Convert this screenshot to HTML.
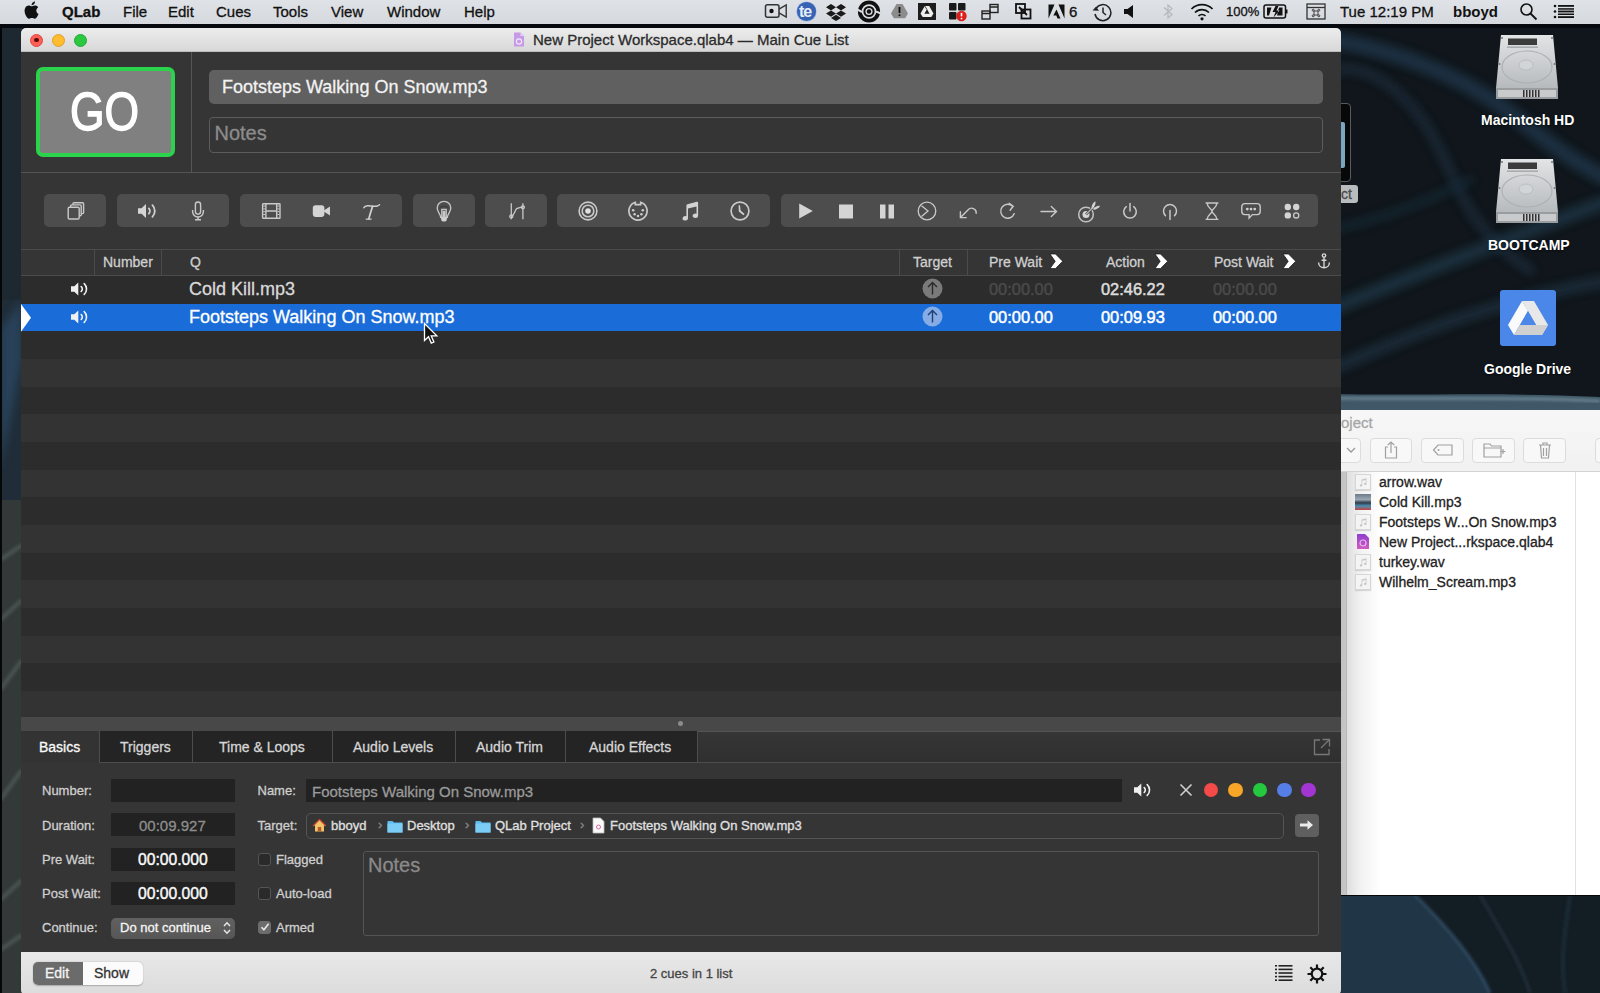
<!DOCTYPE html>
<html><head><meta charset="utf-8">
<style>
*{margin:0;padding:0;box-sizing:border-box}
html,body{width:1600px;height:993px;overflow:hidden}
body{position:relative;font-family:"Liberation Sans",sans-serif;background:#152028}
.a{position:absolute}
.t{position:absolute;white-space:pre;line-height:1;-webkit-text-stroke:0.3px currentColor}
#desk{left:0;top:0;width:1600px;height:993px;
background:
radial-gradient(ellipse 300px 120px at 1420px 960px, rgba(40,70,95,.55), rgba(0,0,0,0) 70%),
radial-gradient(ellipse 200px 400px at 1380px 300px, rgba(30,55,75,.35), rgba(0,0,0,0) 70%),
linear-gradient(160deg,#18252f 0%,#111a21 40%,#16232c 70%,#1b2d3a 100%);}
#menubar{left:0;top:0;width:1600px;height:23.5px;background:linear-gradient(#dfe2e6,#d5d9de);color:#111;font-size:15px}
#menubar .t{top:4px}
.light{width:13px;height:13px;border-radius:50%}
.tg{top:193.8px;height:33px;background:#4d4d4d;border-radius:5px}
.ic{top:198.5px;width:24px;height:24px}
.hd{top:255px;font-size:14px;color:#cfcfcf}
.tm{font-size:16.4px;-webkit-text-stroke:0.5px currentColor}
.tb{top:740px;font-size:14px;color:#d6d6d6}
.lb{font-size:13px;color:#cfcfcf}
.fld{width:124px;height:23px;background:#222}
.dot{top:782.5px;width:14.6px;height:14.6px;border-radius:50%}
.bc{top:818.5px;font-size:13px;color:#e0e0e0}
.bcs{top:817.5px;font-size:13px;color:#888}
.fold{top:819px;width:16px;height:14px}
.cb{width:13px;height:13px;border:1px solid #555;border-radius:3px;background:#2a2a2a}
.dl{font-size:14px;font-weight:bold;color:#fff;text-shadow:0 1px 2px rgba(0,0,0,.6);-webkit-text-stroke:0}
.fb{top:438px;height:24.5px;border:1px solid #dcdcdc;border-radius:4px;background:#f8f8f8}
.fi{left:1355px;width:16px;height:16px;border:1px solid #d6d6d6;background:#f4f4f4;box-shadow:0 1px 1px rgba(0,0,0,.12)}
.ft{left:1379px;font-size:14px;color:#222}
</style></head><body>
<div id="desk" class="a"></div>
<svg class="a" style="left:0;top:0" width="1600" height="993" viewBox="0 0 1600 993">
<defs>
<filter id="bl4" x="-50%" y="-50%" width="200%" height="200%"><feGaussianBlur stdDeviation="4"/></filter>
<filter id="bl2" x="-50%" y="-50%" width="200%" height="200%"><feGaussianBlur stdDeviation="1.5"/></filter>
</defs>
<rect x="0" y="0" width="1600" height="993" fill="#10161b"/>
<!-- left strip -->
<rect x="0" y="22" width="22" height="300" fill="#1e2830"/>
<rect x="0" y="300" width="22" height="200" fill="#202d38"/>
<path d="M0 330 L22 300 L22 360 L0 470z" fill="#2a4662" filter="url(#bl4)" opacity=".8"/>
<rect x="0" y="500" width="22" height="493" fill="#333938"/>
<path d="M0 560 L22 545 M0 690 L22 660 M0 800 L22 770 M0 900 L22 880 M0 620 L22 600 M0 950 L22 935" stroke="#4a524f" stroke-width="4" filter="url(#bl2)"/>
<rect x="0" y="22" width="2" height="971" fill="#050607"/>
<!-- right desktop streaks -->
<g fill="none" stroke-linecap="round">
<path d="M1330 40 C1400 50 1470 80 1520 120 S1590 170 1610 180" stroke="#1d3344" stroke-width="16" filter="url(#bl4)" opacity=".9"/>
<path d="M1330 70 C1380 60 1420 110 1440 150 S1470 230 1530 270" stroke="#1a2c3a" stroke-width="10" filter="url(#bl4)" opacity=".8"/>
<path d="M1330 310 C1400 280 1480 250 1610 200" stroke="#1e3444" stroke-width="14" filter="url(#bl4)" opacity=".8"/>
<path d="M1330 370 C1420 330 1500 300 1610 280" stroke="#1b2f3e" stroke-width="12" filter="url(#bl4)" opacity=".8"/>
<path d="M1330 230 C1380 220 1430 200 1470 180" stroke="#192a37" stroke-width="8" filter="url(#bl4)" opacity=".7"/>
</g>
<!-- band above finder -->
<path d="M1330 394 C1420 396 1500 392 1600 397 L1600 411 L1330 411z" fill="#3f5766"/>
<path d="M1330 398 C1420 400 1500 396 1600 401" stroke="#7b94a2" stroke-width="2" fill="none" filter="url(#bl2)"/>
<!-- bottom right -->
<rect x="1330" y="895" width="270" height="98" fill="#131d24"/>
<path d="M1330 895 L1415 895 C1450 930 1475 960 1490 993 L1330 993z" fill="#203545"/>
<rect x="1330" y="893.5" width="270" height="2.5" fill="#050505"/>
<path d="M1415 895 C1450 930 1475 960 1490 993" stroke="#2e4a60" stroke-width="3" fill="none" filter="url(#bl2)"/>
<path d="M1480 895 C1500 930 1520 960 1530 993 M1570 895 C1565 930 1560 960 1565 993" stroke="#1c2a34" stroke-width="4" fill="none" filter="url(#bl2)"/>
<!-- menubar shadow band -->
<rect x="0" y="22" width="1600" height="6" fill="#06090d"/>
</svg>
<!-- desktop icons -->
<svg class="a" style="left:1494px;top:33px" width="66" height="68" viewBox="0 0 66 68"><defs><linearGradient id="hdg" x1="0" y1="0" x2="0" y2="1"><stop offset="0" stop-color="#e2e4e6"/><stop offset="1" stop-color="#b7babd"/></linearGradient></defs><path d="M7 2h52l5 53H2z" fill="url(#hdg)"/><rect x="2" y="55" width="62" height="11" fill="#9a9da0"/><rect x="4" y="57" width="58" height="7" fill="#c8cacc"/><g fill="#333"><rect x="29" y="57" width="1.5" height="7"/><rect x="32" y="57" width="1.5" height="7"/><rect x="35" y="57" width="1.5" height="7"/><rect x="38" y="57" width="1.5" height="7"/><rect x="41" y="57" width="1.5" height="7"/><rect x="44" y="57" width="1.5" height="7"/></g><rect x="14" y="5.5" width="29" height="6.5" fill="#3c3c3c"/><rect x="13" y="13.5" width="31" height="1.3" fill="#9fa2a5"/><circle cx="8" cy="5" r="1" fill="#777"/><circle cx="58" cy="5" r="1" fill="#777"/><circle cx="5.5" cy="31" r="1" fill="#777"/><circle cx="60.5" cy="31" r="1" fill="#777"/><ellipse cx="33" cy="34" rx="25" ry="16" fill="none" stroke="#aeb1b4" stroke-width="1.2"/><ellipse cx="32" cy="32" rx="7" ry="5" fill="#d2d5d8" stroke="#b5b8bb" stroke-width=".8"/></svg>
<div class="t dl" style="left:1481px;top:113px">Macintosh HD</div>
<svg class="a" style="left:1494px;top:157px" width="66" height="68" viewBox="0 0 66 68"><path d="M7 2h52l5 53H2z" fill="url(#hdg)"/><rect x="2" y="55" width="62" height="11" fill="#9a9da0"/><rect x="4" y="57" width="58" height="7" fill="#c8cacc"/><g fill="#333"><rect x="29" y="57" width="1.5" height="7"/><rect x="32" y="57" width="1.5" height="7"/><rect x="35" y="57" width="1.5" height="7"/><rect x="38" y="57" width="1.5" height="7"/><rect x="41" y="57" width="1.5" height="7"/><rect x="44" y="57" width="1.5" height="7"/></g><rect x="14" y="5.5" width="29" height="6.5" fill="#3c3c3c"/><rect x="13" y="13.5" width="31" height="1.3" fill="#9fa2a5"/><circle cx="8" cy="5" r="1" fill="#777"/><circle cx="58" cy="5" r="1" fill="#777"/><circle cx="5.5" cy="31" r="1" fill="#777"/><circle cx="60.5" cy="31" r="1" fill="#777"/><ellipse cx="33" cy="34" rx="25" ry="16" fill="none" stroke="#aeb1b4" stroke-width="1.2"/><ellipse cx="32" cy="32" rx="7" ry="5" fill="#d2d5d8" stroke="#b5b8bb" stroke-width=".8"/></svg>
<div class="t dl" style="left:1488px;top:238px">BOOTCAMP</div>
<div class="a" style="left:1500px;top:289.5px;width:56px;height:56px;border-radius:3px;background:#4a87e8"></div>
<svg class="a" style="left:1506px;top:297px" width="44" height="40" viewBox="0 0 44 40"><path d="M16 4h12l14 24-6 10z" fill="#e8e8e8"/><path d="M16 4L2 28l6 10 14-24z" fill="#fafafa"/><path d="M8 38h28l6-10H14z" fill="#d0d0d0"/><path d="M22 14l-8 14h16z" fill="#4a87e8"/></svg>
<div class="t dl" style="left:1484px;top:362px">Google Drive</div>

<!-- back window remnant -->
<div class="a" style="left:1330px;top:102.5px;width:21px;height:79px;border:1.5px solid #5a5a5a;border-radius:4px;background:#06080a"></div>
<div class="a" style="left:1341px;top:122px;width:3.5px;height:46px;border-radius:0 2px 2px 0;background:#7aa7bf"></div>
<div class="a" style="left:1330px;top:185px;width:28px;height:18px;border-radius:3px;background:#b9bcbe"></div>
<div class="t" style="left:1341px;top:187px;font-size:14px;color:#4a4a4a">ct</div>

<!-- finder window -->
<div class="a" style="left:1330px;top:409.5px;width:270px;height:485px;background:#fff"></div>
<div class="a" style="left:1330px;top:409.5px;width:270px;height:62px;background:linear-gradient(#f7f7f7,#f1f1f1);border-bottom:1px solid #d4d4d4"></div>
<div class="t" style="left:1336px;top:415px;font-size:15px;color:#a6a6a6">roject</div>
<div class="a fb" style="left:1326px;width:35px"></div>
<svg class="a" style="left:1344px;top:444px" width="14" height="12" viewBox="0 0 14 12"><path d="M3 4l4 4 4-4" fill="none" stroke="#999" stroke-width="1.3"/></svg>
<div class="a fb" style="left:1370px;width:42px"></div>
<svg class="a" style="left:1381px;top:440px" width="20" height="20" viewBox="0 0 20 20"><g fill="none" stroke="#a0a0a0" stroke-width="1.2"><path d="M7 7H4.5v11h11V7H13M10 13V2M6.8 5L10 2l3.2 3"/></g></svg>
<div class="a fb" style="left:1421px;width:43px"></div>
<svg class="a" style="left:1432px;top:443px" width="22" height="14" viewBox="0 0 22 14"><path d="M6 2h14v10H6L1.5 7z" fill="none" stroke="#a0a0a0" stroke-width="1.2"/><circle cx="6.5" cy="7" r="1" fill="#a0a0a0"/></svg>
<div class="a fb" style="left:1472px;width:43px"></div>
<svg class="a" style="left:1482px;top:440px" width="24" height="20" viewBox="0 0 24 20"><g fill="none" stroke="#a0a0a0" stroke-width="1.2"><path d="M2 4h6l1.5 2H19v11H2z"/><path d="M2 8h17M21 9v5M18.5 11.5h5"/></g></svg>
<div class="a fb" style="left:1523px;width:43px"></div>
<svg class="a" style="left:1535px;top:440px" width="20" height="20" viewBox="0 0 20 20"><g fill="none" stroke="#a0a0a0" stroke-width="1.2"><path d="M4 5h12M8 5V3h4v2M5.5 5l1 13h7l1-13M8.5 8v8M11.5 8v8"/></g></svg>
<div class="a fb" style="left:1595px;width:20px"></div>
<div class="a" style="left:1341px;top:472px;width:6px;height:422.5px;background:#e6e6e6;border-right:1px solid #d4d4d4"></div>
<div class="a" style="left:1341px;top:472px;width:40px;height:422.5px;background:linear-gradient(90deg,rgba(0,0,0,.16),rgba(0,0,0,.05) 50%,rgba(0,0,0,0))"></div>
<div class="a" style="left:1330px;top:894.5px;width:270px;height:1.8px;background:#070707"></div>
<div class="a" style="left:1575px;top:472px;width:1px;height:422.5px;background:#e2e2e2"></div>
<div class="a fi" style="top:474px"></div><svg class="a" style="left:1358px;top:477px" width="10" height="10" viewBox="0 0 10 10"><path d="M3.5 2.5l5-1.2v5.6a1.3 1.1 0 1 1-.8-1V3l-3.4.8v4.6a1.3 1.1 0 1 1-.8-1z" fill="#c8c8c8"/></svg><div class="t ft" style="top:475px">arrow.wav</div>
<div class="a" style="left:1355px;top:494px;width:16px;height:16px;background:linear-gradient(#6d7a88,#9aa7b3 35%,#2f3a48 55%,#4a8fb5 75%,#c8403a)"></div><div class="t ft" style="top:495px">Cold Kill.mp3</div>
<div class="a fi" style="top:514px"></div><svg class="a" style="left:1358px;top:517px" width="10" height="10" viewBox="0 0 10 10"><path d="M3.5 2.5l5-1.2v5.6a1.3 1.1 0 1 1-.8-1V3l-3.4.8v4.6a1.3 1.1 0 1 1-.8-1z" fill="#c8c8c8"/></svg><div class="t ft" style="top:515px">Footsteps W...On Snow.mp3</div>
<svg class="a" style="left:1355px;top:533px" width="16" height="17" viewBox="0 0 16 17"><defs><linearGradient id="qg" x1="0" y1="0" x2="0" y2="1"><stop offset="0" stop-color="#8e3fd0"/><stop offset="1" stop-color="#d25ac0"/></linearGradient></defs><path d="M2 1h8l4 4v11H2z" fill="url(#qg)"/><circle cx="8" cy="10" r="3" fill="none" stroke="#e6b8f2" stroke-width="1.2"/></svg><div class="t ft" style="top:535px">New Project...rkspace.qlab4</div>
<div class="a fi" style="top:554px"></div><svg class="a" style="left:1358px;top:557px" width="10" height="10" viewBox="0 0 10 10"><path d="M3.5 2.5l5-1.2v5.6a1.3 1.1 0 1 1-.8-1V3l-3.4.8v4.6a1.3 1.1 0 1 1-.8-1z" fill="#c8c8c8"/></svg><div class="t ft" style="top:555px">turkey.wav</div>
<div class="a fi" style="top:574px"></div><svg class="a" style="left:1358px;top:577px" width="10" height="10" viewBox="0 0 10 10"><path d="M3.5 2.5l5-1.2v5.6a1.3 1.1 0 1 1-.8-1V3l-3.4.8v4.6a1.3 1.1 0 1 1-.8-1z" fill="#c8c8c8"/></svg><div class="t ft" style="top:575px">Wilhelm_Scream.mp3</div>
<!-- QLab window -->
<div class="a" style="left:21px;top:28px;width:1320px;height:966px;background:#353535;border-radius:5px 5px 4px 4px;overflow:hidden"></div>
<div class="a" style="left:21px;top:28px;width:1320px;height:24px;background:linear-gradient(#ececec,#d8d8d8);border-radius:5px 5px 0 0;border-bottom:1px solid #bdbdbd"></div>
<div class="a light" style="left:30px;top:33.5px;background:#fd5f57;border:1px solid #e2463f"><div class="a" style="left:3.3px;top:3.3px;width:4.5px;height:4.5px;border-radius:50%;background:#5a0a06"></div></div>
<div class="a light" style="left:52px;top:33.5px;background:#febc2e;border:1px solid #e0a02a"></div>
<div class="a light" style="left:74px;top:33.5px;background:#2bc840;border:1px solid #22a935"></div>
<svg class="a" style="left:512px;top:31px" width="14" height="17" viewBox="0 0 14 17"><path d="M2 1.5h6.5l3.5 3.5v10.5h-10z" fill="#c69ae6"/><path d="M8.5 1.5v3.5h3.5" fill="#e6d0f5"/><circle cx="7" cy="10.5" r="2.6" fill="none" stroke="#f4e8fb" stroke-width="1.1"/></svg>
<div class="t" style="left:533px;top:32px;font-size:15px;color:#2b2b2b">New Project Workspace.qlab4 — Main Cue List</div>

<!-- GO -->
<div class="a" style="left:36px;top:67px;width:139px;height:90px;border:4.5px solid #2bd24b;border-radius:7px;background:#808080"></div>
<div class="t" style="left:69.5px;top:86.4px;font-size:48px;color:#fff;-webkit-text-stroke:1.3px #fff;transform:scale(0.925,1.11);transform-origin:0 0">GO</div>
<div class="a" style="left:190.5px;top:52px;width:1px;height:120px;background:#555"></div>
<div class="a" style="left:21px;top:172px;width:1320px;height:1px;background:#555"></div>
<div class="a" style="left:208.5px;top:70px;width:1114px;height:34px;background:#606060;border-radius:5px"></div>
<div class="t" style="left:222px;top:78px;font-size:18px;color:#f2f2f2">Footsteps Walking On Snow.mp3</div>
<div class="a" style="left:208.5px;top:117px;width:1114px;height:36px;border:1px solid #5c5c5c;border-radius:4px"></div>
<div class="t" style="left:214.5px;top:123px;font-size:20px;color:#8c8c8c">Notes</div>

<!-- toolbar groups -->
<div class="a tg" style="left:44px;width:61.5px"></div>
<div class="a tg" style="left:116.5px;width:112px"></div>
<div class="a tg" style="left:240px;width:162px"></div>
<div class="a tg" style="left:413px;width:61.5px"></div>
<div class="a tg" style="left:485px;width:61.5px"></div>
<div class="a tg" style="left:557px;width:212.5px"></div>
<div class="a tg" style="left:780.5px;width:537px"></div>
<!-- toolbar icons -->
<svg class="a ic" style="left:63.7px" viewBox="0 0 24 24"><g fill="none" stroke="#c9c9c9" stroke-width="1.4"><rect x="4.2" y="8.3" width="11" height="11.7" rx="1.3"/><path d="M6.6 8.1V6.9a1 1 0 0 1 1-1h8.6a1 1 0 0 1 1 1v8.8a1 1 0 0 1-1 1h-.9"/><path d="M9 5.8V4.8a1 1 0 0 1 1-1h8.6a1 1 0 0 1 1 1v8.8a1 1 0 0 1-1 1h-1.2"/></g></svg>
<svg class="a ic" style="left:135.2px" viewBox="0 0 24 24"><path d="M3 9.3h3.6l4.4-4.2v13.8l-4.4-4.2H3z" fill="#d4d4d4"/><g fill="none" stroke="#d0d0d0" stroke-width="1.8" stroke-linecap="round"><path d="M13.8 9.4a3.6 3.6 0 0 1 0 5.2"/><path d="M17.4 6.2a8.2 8.2 0 0 1 0 11.6"/></g></svg>
<svg class="a ic" style="left:185.7px" viewBox="0 0 24 24"><g fill="none" stroke="#c9c9c9" stroke-width="1.4"><rect x="9.4" y="3" width="5.2" height="12.2" rx="2.6"/><path d="M6.6 11v1.6a5.4 5.4 0 0 0 10.8 0V11"/><path d="M12 18v2.6M9 20.8h6"/></g></svg>
<svg class="a ic" style="left:258.7px" viewBox="0 0 24 24"><g fill="none" stroke="#c9c9c9" stroke-width="1.4"><rect x="3.6" y="4.7" width="17.4" height="14.6" rx=".6"/><path d="M6.9 4.7v14.6M17.7 4.7v14.6M6.9 12h10.8"/></g><g fill="#c9c9c9"><rect x="4.2" y="6.6" width="2" height="1"/><rect x="4.2" y="9.4" width="2" height="1"/><rect x="4.2" y="12.2" width="2" height="1"/><rect x="4.2" y="15" width="2" height="1"/><rect x="18.4" y="6.6" width="2" height="1"/><rect x="18.4" y="9.4" width="2" height="1"/><rect x="18.4" y="12.2" width="2" height="1"/><rect x="18.4" y="15" width="2" height="1"/></g></svg>
<svg class="a ic" style="left:309px" viewBox="0 0 24 24"><rect x="3.8" y="6.3" width="11.6" height="11.6" rx="2.8" fill="#d4d4d4"/><path d="M14 12l7-4.6v9.2z" fill="#d4d4d4"/></svg>
<svg class="a ic" style="left:359px" viewBox="0 0 24 24"><g fill="none" stroke="#d0d0d0" stroke-linecap="round"><path d="M4.8 8.8C5.6 7 7.2 6.5 9.8 6.8C13 7.2 16 7.8 18.3 7C19.4 6.6 20 6.1 20.5 5.7" stroke-width="1.5"/><path d="M13.6 7.4C12.3 11.2 11 15.2 9.8 19.8" stroke-width="1.7"/><path d="M7.2 20.1H12.2" stroke-width="1.2"/></g></svg>
<svg class="a ic" style="left:431.6px" viewBox="0 0 24 24"><g fill="none" stroke="#c9c9c9" stroke-width="1.3"><path d="M8.6 18.3c0-3.2-3.4-5.3-3.4-9.2a6.8 6.8 0 0 1 13.6 0c0 3.9-3.4 6-3.4 9.2z"/><path d="M9.8 18v-7.6h4.4V18M11.4 18v-5.6h1.2V18"/></g><path d="M8.3 8.6c1-1.2 2.2-1.6 3.7-1.6s2.7.4 3.7 1.6" fill="none" stroke="#3a3a3a" stroke-width="1.2"/><path d="M8.8 18.6h6.4l-.6 2.6c-.2.7-.8 1.2-1.5 1.2h-2.2c-.7 0-1.3-.5-1.5-1.2z" fill="#d0d0d0"/></svg>
<svg class="a ic" style="left:503.6px" viewBox="0 0 24 24"><g fill="none" stroke="#c9c9c9" stroke-width="1.3"><path d="M7.3 4.3v16M18.9 4.3v16"/><path d="M7.3 17.4c3-1 3.5-6.2 5.5-7.8c1.8-1.3 4-.7 6.1-2"/><circle cx="7.3" cy="17.4" r="1.5"/><circle cx="18.9" cy="8.3" r="1.5"/></g></svg>
<svg class="a ic" style="left:576.4px" viewBox="0 0 24 24"><g fill="none" stroke="#c9c9c9" stroke-width="1.6"><circle cx="12" cy="12" r="8.9"/><circle cx="12" cy="12" r="5.8"/></g><circle cx="12" cy="12" r="2.8" fill="#e0e0e0"/></svg>
<svg class="a ic" style="left:626.3px" viewBox="0 0 24 24"><g fill="none" stroke="#c9c9c9" stroke-width="1.7"><path d="M9.3 3.3A9.1 9.1 0 1 0 14.7 3.3V5.6H9.3z"/></g><g fill="#cfcfcf"><circle cx="7.2" cy="11.3" r="1.25"/><circle cx="16.8" cy="11.3" r="1.25"/><circle cx="8.6" cy="15.2" r="1.25"/><circle cx="15.4" cy="15.2" r="1.25"/><circle cx="12" cy="16.9" r="1.25"/></g></svg>
<svg class="a ic" style="left:677.6px" viewBox="0 0 24 24"><path d="M8.4 6.6c0-.7.4-1.2 1.1-1.4l9.3-2.4c.7-.2 1.3.3 1.3 1v12.9a2.7 2.2 0 1 1-1.6-2V7.5L10 9.6v9.7a2.7 2.2 0 1 1-1.6-2z" fill="#d2d2d2"/></svg>
<svg class="a ic" style="left:727.6px" viewBox="0 0 24 24"><circle cx="12" cy="12" r="8.9" fill="none" stroke="#c9c9c9" stroke-width="1.7"/><path d="M10.6 6.2h1.4l.6 5.4 4 3.4-1.2 1.2-4.6-3.6z" fill="#d0d0d0"/></svg>
<svg class="a ic" style="left:793.7px" viewBox="0 0 24 24"><path d="M5.2 4.6L18.8 12 5.2 19.6z" fill="#d4d4d4"/></svg>
<svg class="a ic" style="left:834px" viewBox="0 0 24 24"><rect x="5" y="5.5" width="14" height="14" fill="#d4d4d4"/></svg>
<svg class="a ic" style="left:875px" viewBox="0 0 24 24"><rect x="5" y="5.5" width="5.5" height="14" fill="#d4d4d4"/><rect x="13.5" y="5.5" width="5.5" height="14" fill="#d4d4d4"/></svg>
<svg class="a ic" style="left:915px" viewBox="0 0 24 24"><g fill="none" stroke="#c9c9c9" stroke-width="1.3"><circle cx="12" cy="12" r="8.8"/><path d="M6.5 6.8l6.5 5.2-6.5 5.6"/></g></svg>
<svg class="a ic" style="left:955.5px" viewBox="0 0 24 24"><g fill="none" stroke="#c9c9c9" stroke-width="1.4" stroke-linecap="round"><path d="M5 18l7.2-7.3a4.6 4.6 0 0 1 8 3.5"/><path d="M4.4 12.8V18.6h5.8"/></g></svg>
<svg class="a ic" style="left:996px" viewBox="0 0 24 24"><g fill="none" stroke="#c9c9c9" stroke-width="1.4" stroke-linecap="round"><path d="M18.3 14.6A7 7 0 1 1 16.7 7.3"/><path d="M13.2 4.2l4 3.1-3.1 4"/></g></svg>
<svg class="a ic" style="left:1037px" viewBox="0 0 24 24"><g fill="none" stroke="#c9c9c9" stroke-width="1.4" stroke-linecap="round"><path d="M4 12.5h15.5M14.3 7.6l5.2 4.9-5.2 4.9"/></g></svg>
<svg class="a ic" style="left:1077px" viewBox="0 0 24 24"><circle cx="9" cy="15.5" r="7.3" fill="none" stroke="#c4c4c4" stroke-width="1.5"/><circle cx="9" cy="15.4" r="3.5" fill="#d6d6d6"/><path d="M9 15.4L16 8.4" stroke="#4d4d4d" stroke-width="2.6"/><path d="M9 15.4L16 8.4" stroke="#c8c8c8" stroke-width="1.1"/><path d="M14.6 9.4C14.2 6.6 16 3.8 18.4 2.3C19 4.6 17.8 7.6 15.8 9.4z" fill="#d4d4d4"/><path d="M16.2 10.6C19 10.9 21.8 9 23 6.9C20.6 6.3 17.9 7.8 16.2 9.8z" fill="#d4d4d4"/></svg>
<svg class="a ic" style="left:1118px" viewBox="0 0 24 24"><g fill="none" stroke="#c9c9c9" stroke-width="1.5" stroke-linecap="round"><path d="M8.3 7.6a6.3 6.3 0 1 0 7.4 0"/><path d="M12 4.6v7.4"/></g></svg>
<svg class="a ic" style="left:1158px" viewBox="0 0 24 24"><g fill="none" stroke="#c9c9c9" stroke-width="1.5" stroke-linecap="round"><path d="M7.4 16.6a6.5 6.5 0 1 1 9.2 0"/><path d="M12 11.5v9"/></g></svg>
<svg class="a ic" style="left:1199.7px" viewBox="0 0 24 24"><g fill="none" stroke="#c9c9c9" stroke-width="1.4"><path d="M5.6 4h12.8M5.6 20.4h12.8"/><path d="M7.2 4.2c0 4.5 4.8 5.5 4.8 8s-4.8 3.5-4.8 8M16.8 4.2c0 4.5-4.8 5.5-4.8 8s4.8 3.5 4.8 8"/></g></svg>
<svg class="a ic" style="left:1239px" viewBox="0 0 24 24"><g fill="none" stroke="#c9c9c9" stroke-width="1.4"><path d="M5.8 4.6h12.4a3 3 0 0 1 3 3v5a3 3 0 0 1-3 3h-4.8l-3.3 3.4v-3.4H5.8a3 3 0 0 1-3-3v-5a3 3 0 0 1 3-3z"/></g><g fill="#d0d0d0"><circle cx="8.3" cy="10.1" r="1.4"/><circle cx="12" cy="10.1" r="1.4"/><circle cx="15.7" cy="10.1" r="1.4"/></g></svg>
<svg class="a ic" style="left:1280px" viewBox="0 0 24 24"><g fill="#d4d4d4"><circle cx="7.8" cy="8" r="3.2"/><circle cx="16.2" cy="8" r="3.2"/><circle cx="7.8" cy="16.4" r="3.2"/></g><circle cx="16.2" cy="16.4" r="2.6" fill="none" stroke="#c9c9c9" stroke-width="1.3"/></svg>
<div class="a" style="left:21px;top:331.30px;width:1320px;height:27.68px;background:#2c2c2c"></div>
<div class="a" style="left:21px;top:358.98px;width:1320px;height:27.68px;background:#333333"></div>
<div class="a" style="left:21px;top:386.66px;width:1320px;height:27.68px;background:#2c2c2c"></div>
<div class="a" style="left:21px;top:414.34px;width:1320px;height:27.68px;background:#333333"></div>
<div class="a" style="left:21px;top:442.02px;width:1320px;height:27.68px;background:#2c2c2c"></div>
<div class="a" style="left:21px;top:469.70px;width:1320px;height:27.68px;background:#333333"></div>
<div class="a" style="left:21px;top:497.38px;width:1320px;height:27.68px;background:#2c2c2c"></div>
<div class="a" style="left:21px;top:525.06px;width:1320px;height:27.68px;background:#333333"></div>
<div class="a" style="left:21px;top:552.74px;width:1320px;height:27.68px;background:#2c2c2c"></div>
<div class="a" style="left:21px;top:580.42px;width:1320px;height:27.68px;background:#333333"></div>
<div class="a" style="left:21px;top:608.10px;width:1320px;height:27.68px;background:#2c2c2c"></div>
<div class="a" style="left:21px;top:635.78px;width:1320px;height:27.68px;background:#333333"></div>
<div class="a" style="left:21px;top:663.46px;width:1320px;height:27.68px;background:#2c2c2c"></div>
<div class="a" style="left:21px;top:691.14px;width:1320px;height:25.86px;background:#333333"></div><!-- cue list header -->
<div class="a" style="left:21px;top:248.5px;width:1320px;height:1px;background:#4b4b4b"></div>
<div class="a" style="left:21px;top:274.5px;width:1320px;height:1px;background:#4b4b4b"></div>
<div class="a" style="left:93.5px;top:249px;width:1px;height:26px;background:#4b4b4b"></div>
<div class="a" style="left:161px;top:249px;width:1px;height:26px;background:#4b4b4b"></div>
<div class="a" style="left:898.5px;top:249px;width:1px;height:26px;background:#4b4b4b"></div>
<div class="a" style="left:966.5px;top:249px;width:1px;height:26px;background:#4b4b4b"></div>
<div class="t hd" style="left:103px">Number</div>
<div class="t hd" style="left:190px">Q</div>
<div class="t hd" style="left:913px">Target</div>
<div class="t hd" style="left:989px">Pre Wait</div>
<div class="t hd" style="left:1106px">Action</div>
<div class="t hd" style="left:1214px">Post Wait</div>
<svg class="a" style="left:1048.5px;top:253.4px" width="15" height="17" viewBox="0 0 15 17"><path d="M1 1h5.5l7.2 7.3-7.2 7.3H1l5.2-7.3z" fill="#fff" stroke="#111" stroke-width=".7" stroke-linejoin="round"/></svg>
<svg class="a" style="left:1153.7px;top:253.4px" width="15" height="17" viewBox="0 0 15 17"><path d="M1 1h5.5l7.2 7.3-7.2 7.3H1l5.2-7.3z" fill="#fff" stroke="#111" stroke-width=".7" stroke-linejoin="round"/></svg>
<svg class="a" style="left:1282.3px;top:253.4px" width="15" height="17" viewBox="0 0 15 17"><path d="M1 1h5.5l7.2 7.3-7.2 7.3H1l5.2-7.3z" fill="#fff" stroke="#111" stroke-width=".7" stroke-linejoin="round"/></svg>
<svg class="a" style="left:1315px;top:252px" width="18" height="18" viewBox="0 0 18 18"><g fill="none" stroke="#d6d6d6" stroke-width="1.4"><circle cx="9" cy="3.6" r="1.7"/><path d="M9 5.3v10.5M3.6 10.6c0 3 2.4 5.2 5.4 5.2s5.4-2.2 5.4-5.2M6.6 8.3h4.8"/></g></svg>

<!-- rows -->
<div class="a" style="left:21px;top:275.5px;width:1320px;height:28.1px;background:#2c2c2c"></div>
<div class="a" style="left:21px;top:303.6px;width:1320px;height:27.7px;background:#1a6dd9"></div>
<svg class="a" style="left:21px;top:303.6px" width="12" height="28" viewBox="0 0 12 28"><path d="M0 0L10 13.8 0 27.7z" fill="#fff"/></svg>
<svg class="a" style="left:69.2px;top:279.5px" width="22" height="18" viewBox="0 0 22 18"><path d="M2 6.2h3.3l4-3.6v12.8l-4-3.6H2z" fill="#f0f0f0"/><g fill="none" stroke="#f0f0f0" stroke-width="1.6" stroke-linecap="round"><path d="M12.2 6.6a3.2 3.2 0 0 1 0 4.8"/><path d="M15.2 3.6a7.4 7.4 0 0 1 0 10.8"/></g></svg>
<svg class="a" style="left:69.2px;top:307.5px" width="22" height="18" viewBox="0 0 22 18"><path d="M2 6.2h3.3l4-3.6v12.8l-4-3.6H2z" fill="#f0f0f0"/><g fill="none" stroke="#f0f0f0" stroke-width="1.6" stroke-linecap="round"><path d="M12.2 6.6a3.2 3.2 0 0 1 0 4.8"/><path d="M15.2 3.6a7.4 7.4 0 0 1 0 10.8"/></g></svg>
<div class="t" style="left:189px;top:280px;font-size:18px;color:#d9d9d9">Cold Kill.mp3</div>
<div class="t" style="left:189px;top:308px;font-size:18px;color:#ffffff">Footsteps Walking On Snow.mp3</div>
<svg class="a" style="left:921.5px;top:278px" width="21" height="21" viewBox="0 0 21 21"><circle cx="10.5" cy="10.5" r="10" fill="#7a7a7a"/><path d="M10.5 16.5V4.5M6 9l4.5-4.5L15 9" fill="none" stroke="#2a2a2a" stroke-width="1.4"/></svg>
<svg class="a" style="left:921.5px;top:306px" width="21" height="21" viewBox="0 0 21 21"><circle cx="10.5" cy="10.5" r="10" fill="#86ace6"/><path d="M10.5 16.5V4.5M6 9l4.5-4.5L15 9" fill="none" stroke="#1d3f73" stroke-width="1.4"/></svg>
<div class="t tm" style="left:989px;top:281px;color:#4a4a4a">00:00.00</div>
<div class="t tm" style="left:1101px;top:281px;color:#dcdcdc">02:46.22</div>
<div class="t tm" style="left:1213px;top:281px;color:#4a4a4a">00:00.00</div>
<div class="t tm" style="left:989px;top:309px;color:#fff">00:00.00</div>
<div class="t tm" style="left:1101px;top:309px;color:#fff">00:09.93</div>
<div class="t tm" style="left:1213px;top:309px;color:#fff">00:00.00</div>
<!-- mouse cursor -->
<svg class="a" style="left:423px;top:322px" width="16" height="24" viewBox="0 0 16 24"><path d="M1.5 1.5v17l4-3.8 2.8 6.4 2.6-1.1-2.7-6.2h5.6z" fill="#111" stroke="#fff" stroke-width="1.3"/></svg>
<!-- splitter -->
<div class="a" style="left:21px;top:717px;width:1320px;height:14px;background:#484848"></div>
<div class="a" style="left:678px;top:721px;width:5px;height:5px;border-radius:50%;background:#8c8c8c"></div>
<!-- tabs -->
<div class="a" style="left:21px;top:730.5px;width:1320px;height:32px;background:linear-gradient(#363636,#2f2f2f)"></div>
<div class="a" style="left:21px;top:730.5px;width:1320px;height:1px;background:#555"></div>
<div class="a" style="left:99.5px;top:731px;width:597px;height:31px;background:#242424"></div>
<div class="a" style="left:21px;top:762px;width:1320px;height:1px;background:#4d4d4d"></div>
<div class="a" style="left:21px;top:731px;width:78.5px;height:32px;background:#333"></div>
<div class="a" style="left:99px;top:731px;width:1px;height:32px;background:#4d4d4d"></div>
<div class="a" style="left:192px;top:731px;width:1px;height:31px;background:#4d4d4d"></div>
<div class="a" style="left:332px;top:731px;width:1px;height:31px;background:#4d4d4d"></div>
<div class="a" style="left:454.5px;top:731px;width:1px;height:31px;background:#4d4d4d"></div>
<div class="a" style="left:565px;top:731px;width:1px;height:31px;background:#4d4d4d"></div>
<div class="a" style="left:696.5px;top:731px;width:1px;height:31px;background:#4d4d4d"></div>
<div class="t tb" style="left:39px;color:#fafafa">Basics</div>
<div class="t tb" style="left:120px">Triggers</div>
<div class="t tb" style="left:219px">Time &amp; Loops</div>
<div class="t tb" style="left:353px">Audio Levels</div>
<div class="t tb" style="left:476px">Audio Trim</div>
<div class="t tb" style="left:589px">Audio Effects</div>
<svg class="a" style="left:1312px;top:737px" width="20" height="20" viewBox="0 0 20 20"><g fill="none" stroke="#777" stroke-width="1.3"><path d="M8 3H2.5v14.5H17V12"/><path d="M10.5 2.5h7v7M17.5 2.5l-8.5 8.5"/></g></svg>

<!-- form -->
<div class="t lb" style="left:42px;top:784px">Number:</div>
<div class="t lb" style="left:42px;top:818.5px">Duration:</div>
<div class="t lb" style="left:42px;top:853px">Pre Wait:</div>
<div class="t lb" style="left:42px;top:887px">Post Wait:</div>
<div class="t lb" style="left:42px;top:921px">Continue:</div>
<div class="a fld" style="left:111px;top:779px"></div>
<div class="a fld" style="left:111px;top:813px"></div>
<div class="a fld" style="left:111px;top:847.5px"></div>
<div class="a fld" style="left:111px;top:882px"></div>
<div class="t" style="left:139px;top:818px;font-size:15px;color:#8e8e8e">00:09.927</div>
<div class="t" style="left:138px;top:851.5px;font-size:15.7px;color:#fafafa;-webkit-text-stroke:0.4px #fafafa">00:00.000</div>
<div class="t" style="left:138px;top:886px;font-size:15.7px;color:#fafafa;-webkit-text-stroke:0.4px #fafafa">00:00.000</div>
<div class="a" style="left:111px;top:917.5px;width:124px;height:21px;border-radius:5px;background:linear-gradient(#616161,#565656)"></div>
<div class="t" style="left:120px;top:921px;font-size:13px;color:#f4f4f4">Do not continue</div>
<svg class="a" style="left:221px;top:919px" width="12" height="18" viewBox="0 0 12 18"><path d="M3 7l3-3.2L9 7M3 11l3 3.2L9 11" fill="none" stroke="#e6e6e6" stroke-width="1.5"/></svg>

<div class="t lb" style="left:257.5px;top:784px">Name:</div>
<div class="t lb" style="left:257.5px;top:818.5px">Target:</div>
<div class="a" style="left:306px;top:779px;width:816px;height:23px;background:#222"></div>
<div class="t" style="left:312px;top:783.5px;font-size:15px;color:#9a9a9a">Footsteps Walking On Snow.mp3</div>
<svg class="a" style="left:1132px;top:781px" width="22" height="18" viewBox="0 0 22 18"><path d="M2 6.2h3.3l4-3.6v12.8l-4-3.6H2z" fill="#f0f0f0"/><g fill="none" stroke="#f0f0f0" stroke-width="1.6" stroke-linecap="round"><path d="M12.2 6.6a3.2 3.2 0 0 1 0 4.8"/><path d="M15.2 3.6a7.4 7.4 0 0 1 0 10.8"/></g></svg>
<svg class="a" style="left:1179px;top:783px" width="14" height="14" viewBox="0 0 14 14"><path d="M1.5 1.5l11 11M12.5 1.5l-11 11" stroke="#d0d0d0" stroke-width="1.6"/></svg>
<div class="a dot" style="left:1203.7px;background:#f44a4a"></div>
<div class="a dot" style="left:1228.3px;background:#f8a628"></div>
<div class="a dot" style="left:1252.7px;background:#25c93f"></div>
<div class="a dot" style="left:1277.1px;background:#557ee6"></div>
<div class="a dot" style="left:1301.4px;background:#a335d2"></div>
<div class="a" style="left:306px;top:813px;width:978px;height:25.5px;border:1px solid #555;border-radius:5px"></div>
<svg class="a" style="left:312px;top:818px" width="15" height="15" viewBox="0 0 15 15"><path d="M7.5 1.5L1.5 7.5h1.5v6h9v-6h1.5z" fill="#f2c46a"/><rect x="5.8" y="9" width="3.4" height="4.5" fill="#b55a2e"/><path d="M7.5 1.5L1 8" stroke="#c9462e" stroke-width="1.2"/><path d="M7.5 1.5L14 8" stroke="#c9462e" stroke-width="1.2"/></svg>
<div class="t bc" style="left:331px">bboyd</div>
<div class="t bcs" style="left:378px">›</div>
<svg class="a fold" style="left:387px" viewBox="0 0 16 14"><path d="M0.5 2h5l1.5 1.5h8.5v10H0.5z" fill="#5cbcf0"/><rect x="0.5" y="4.5" width="15" height="9" fill="#7ccdf6"/></svg>
<div class="t bc" style="left:407px">Desktop</div>
<div class="t bcs" style="left:465px">›</div>
<svg class="a fold" style="left:475px" viewBox="0 0 16 14"><path d="M0.5 2h5l1.5 1.5h8.5v10H0.5z" fill="#5cbcf0"/><rect x="0.5" y="4.5" width="15" height="9" fill="#7ccdf6"/></svg>
<div class="t bc" style="left:495px">QLab Project</div>
<div class="t bcs" style="left:580px">›</div>
<svg class="a" style="left:592px;top:817px" width="13" height="17" viewBox="0 0 13 17"><path d="M1 1h7.5L12 4.5V16H1z" fill="#fafafa" stroke="#bbb" stroke-width=".8"/><circle cx="6.5" cy="10" r="2" fill="none" stroke="#d46aa8" stroke-width="1"/></svg>
<div class="t bc" style="left:610px">Footsteps Walking On Snow.mp3</div>
<div class="a" style="left:1295px;top:813.5px;width:24px;height:23.5px;border-radius:4px;background:#5f5f5f"></div>
<svg class="a" style="left:1297px;top:815px" width="20" height="20" viewBox="0 0 20 20"><path d="M3 8.6h7.5V5.2L16 10l-5.5 4.8v-3.4H3z" fill="#ececec"/></svg>

<div class="a cb" style="left:258px;top:853px"></div>
<div class="a cb" style="left:258px;top:887px"></div>
<div class="a cb" style="left:258px;top:921px;background:#6c6c6c;border-color:#6c6c6c"></div>
<svg class="a" style="left:259px;top:921px" width="12" height="12" viewBox="0 0 12 12"><path d="M2.5 6.2l2.4 2.6L9.6 2.8" fill="none" stroke="#e8e8e8" stroke-width="1.6"/></svg>
<div class="t lb" style="left:276px;top:853px">Flagged</div>
<div class="t lb" style="left:276px;top:887px">Auto-load</div>
<div class="t lb" style="left:276px;top:921px">Armed</div>
<div class="a" style="left:363px;top:850.5px;width:956px;height:85px;border:1px solid #555;border-radius:3px"></div>
<div class="t" style="left:368px;top:855px;font-size:20px;color:#8a8a8a">Notes</div>

<!-- bottom bar -->
<div class="a" style="left:21px;top:951.5px;width:1320px;height:42px;background:linear-gradient(#e8e8e8,#dcdcdc);border-radius:0 0 4px 4px"></div>
<div class="a" style="left:33px;top:961.5px;width:110px;height:23px;border-radius:5px;background:#fbfbfb;box-shadow:0 0.5px 1.5px rgba(0,0,0,.25)"></div>
<div class="a" style="left:33px;top:961.5px;width:50px;height:23px;border-radius:5px 0 0 5px;background:#6b6b6b"></div>
<div class="t" style="left:45px;top:966px;font-size:14px;color:#f4f4f4">Edit</div>
<div class="t" style="left:94px;top:966px;font-size:14px;color:#333">Show</div>
<div class="t" style="left:650px;top:966.5px;font-size:13px;color:#444">2 cues in 1 list</div>
<svg class="a" style="left:1273px;top:963px" width="22" height="20" viewBox="0 0 22 20"><g fill="#222"><rect x="2" y="2" width="2" height="1.6"/><rect x="2" y="5.6" width="2" height="1.6"/><rect x="2" y="9.2" width="2" height="1.6"/><rect x="2" y="12.8" width="2" height="1.6"/><rect x="2" y="16.4" width="2" height="1.6"/><rect x="5.5" y="2" width="14" height="1.6"/><rect x="5.5" y="5.6" width="14" height="1.6"/><rect x="5.5" y="9.2" width="14" height="1.6"/><rect x="5.5" y="12.8" width="14" height="1.6"/><rect x="5.5" y="16.4" width="14" height="1.6"/></g></svg>
<svg class="a" style="left:1306px;top:962.5px" width="22" height="22" viewBox="0 0 22 22"><g stroke="#111" stroke-width="2.2" stroke-linecap="butt"><path d="M11 1.5v19M1.5 11h19M4.3 4.3l13.4 13.4M17.7 4.3L4.3 17.7"/></g><circle cx="11" cy="11" r="6.4" fill="#111"/><circle cx="11" cy="11" r="4.2" fill="#e2e2e2"/></svg>
<div id="menubar" class="a">
  <svg class="a" style="left:24px;top:1px" width="15" height="18" viewBox="0 0 15 18"><path d="M12.3 9.6c0-2.2 1.8-3.3 1.9-3.4-1-1.5-2.6-1.7-3.2-1.7-1.4-.1-2.6.8-3.3.8-.7 0-1.7-.8-2.8-.8-1.5 0-2.8.9-3.6 2.2-1.5 2.7-.4 6.600 1.100 8.800.7 1.100 1.600 2.300 2.700 2.200 1.100 0 1.500-.700 2.800-.700 1.300 0 1.700.700 2.800.700 1.200 0 1.900-1.100 2.600-2.200.8-1.200 1.200-2.400 1.200-2.500-.1 0-2.200-.9-2.200-3.400zM10.100 3.100c.6-.7 1-1.700.9-2.700-.9 0-1.900.6-2.500 1.300-.6.600-1.100 1.600-.9 2.600 1 .1 1.900-.5 2.500-1.200z" fill="#111"/></svg>
  <div class="t" style="left:62px;font-weight:bold">QLab</div>
  <div class="t" style="left:123px">File</div>
  <div class="t" style="left:168px">Edit</div>
  <div class="t" style="left:216px">Cues</div>
  <div class="t" style="left:273px">Tools</div>
  <div class="t" style="left:331px">View</div>
  <div class="t" style="left:387px">Window</div>
  <div class="t" style="left:464px">Help</div>
</div>
<!-- menubar right -->
<svg class="a" style="left:764px;top:3px" width="24" height="16" viewBox="0 0 24 16"><rect x="1.5" y="1.8" width="13.5" height="12.4" rx="2" fill="none" stroke="#333" stroke-width="1.5"/><circle cx="7.5" cy="8" r="2.2" fill="#111"/><path d="M15 6.2l7.2-4.2v12l-7.2-4.2" fill="none" stroke="#333" stroke-width="1.4"/></svg>
<div class="a" style="left:796.5px;top:2px;width:19.5px;height:19px;border-radius:50%;background:#3763b4;box-shadow:0 0 0 .6px #9fb6e0"></div>
<div class="t" style="left:799px;top:3.5px;font-size:16px;font-weight:bold;color:#e8eef8;letter-spacing:-1.2px;-webkit-text-stroke:0">te</div>
<svg class="a" style="left:825px;top:3px" width="22" height="18" viewBox="0 0 22 18"><g fill="#1a1a1a"><path d="M6 1L1 4.2l5 3.2 5-3.2z"/><path d="M16 1l-5 3.2 5 3.2 5-3.2z"/><path d="M1 10.6l5 3.2 5-3.2-5-3.2z"/><path d="M21 10.6l-5 3.2-5-3.2 5-3.2z"/><path d="M6 15l5 3 5-3-5-3.2z"/></g></svg>
<svg class="a" style="left:857px;top:0px" width="24" height="23" viewBox="0 0 24 23"><circle cx="12" cy="11.5" r="9.2" fill="none" stroke="#111" stroke-width="3.8"/><path d="M0 9.5l5 2.5M24 13.5l-5-2" stroke="#d9dde1" stroke-width="2"/><circle cx="12" cy="11.5" r="4.6" fill="none" stroke="#111" stroke-width="2"/><circle cx="12" cy="11.5" r="2.2" fill="#111"/></svg>
<svg class="a" style="left:891px;top:3px" width="17" height="16" viewBox="0 0 17 16"><path d="M5.5 1h6l5.5 9.5-2.8 4.8H2.8L0 10.5z" fill="#8c8c8c"/><path d="M8.5 4v6" stroke="#111" stroke-width="1.8"/><circle cx="8.5" cy="12.3" r="1" fill="#111"/></svg>
<div class="a" style="left:918px;top:3px;width:18px;height:17px;background:#1d1d1d"></div>
<svg class="a" style="left:920px;top:5px" width="14" height="13" viewBox="0 0 14 13"><path d="M4.8 1h4.4l4.3 7.4-2.2 3.6H2.7L.5 8.4z" fill="#eee"/><path d="M7 4.2l-2.6 4.6h5.2z" fill="#1d1d1d"/><path d="M4.8 1l2.2 3.7" stroke="#1d1d1d" stroke-width=".8"/></svg>
<svg class="a" style="left:949px;top:3px" width="19" height="19" viewBox="0 0 19 19"><g fill="#1a1a1a"><rect x="0" y="0" width="7.5" height="7.5" rx="1"/><rect x="9" y="0" width="7.5" height="7.5" rx="1"/><rect x="0" y="9" width="7.5" height="7.5" rx="1"/></g><circle cx="12.5" cy="13" r="5.2" fill="#d9201e"/><path d="M12.5 9.8v3.6" stroke="#fff" stroke-width="1.6"/><circle cx="12.5" cy="15.6" r=".9" fill="#fff"/></svg>
<svg class="a" style="left:981px;top:3px" width="18" height="17" viewBox="0 0 18 17"><g fill="none" stroke="#222" stroke-width="1.4"><rect x="1" y="8" width="8" height="8"/><rect x="9" y="1.5" width="8" height="8"/><path d="M1 10.5h8M9 4h8"/></g></svg>
<svg class="a" style="left:1015px;top:3px" width="17" height="17" viewBox="0 0 17 17"><g fill="none" stroke="#111" stroke-width="1.8"><rect x="1" y="1" width="9" height="9"/><rect x="6.5" y="6.5" width="9" height="9"/><path d="M4 4l8 8"/></g></svg>
<svg class="a" style="left:1047.5px;top:4px" width="17" height="15" viewBox="0 0 17 15"><path d="M0.5 0.5h6L0.5 14.5zM10.5 0.5h6v14zM8.5 5.5l4 9h-3l-1.2-3h-3z" fill="#111"/></svg>
<div class="t" style="left:1069px;top:4px;font-size:15px;color:#111">6</div>
<svg class="a" style="left:1091px;top:1.5px" width="22" height="20" viewBox="0 0 22 20"><g fill="none" stroke="#222" stroke-width="1.5"><path d="M5 6.5A8 8 0 1 1 4 12"/><path d="M12 5.5v5l3 2.5"/></g><path d="M1.5 8.5l3.5-3.8 3 4z" fill="#222"/></svg>
<svg class="a" style="left:1123px;top:4px" width="13" height="15" viewBox="0 0 13 15"><path d="M1 5h3.5L10 1v13L4.5 10H1z" fill="#111"/></svg>
<svg class="a" style="left:1162px;top:2px" width="12" height="19" viewBox="0 0 12 19"><path d="M2 5.5l8 7-4 3.5V3l4 3.5-8 7" fill="none" stroke="#b4b8bc" stroke-width="1.2"/></svg>
<svg class="a" style="left:1190px;top:2px" width="24" height="19" viewBox="0 0 24 19"><g fill="none" stroke="#111" stroke-width="1.7"><path d="M1.5 7a15 15 0 0 1 21 0"/><path d="M5 10.5a10 10 0 0 1 14 0"/><path d="M8.5 14a5 5 0 0 1 7 0"/></g><circle cx="12" cy="16.8" r="1.6" fill="#111"/></svg>
<div class="t" style="left:1226px;top:5px;font-size:13px;color:#111">100%</div>
<svg class="a" style="left:1263px;top:3px" width="27" height="17" viewBox="0 0 27 17"><rect x="1" y="2" width="21.5" height="13" rx="2" fill="none" stroke="#111" stroke-width="1.5"/><path d="M23.5 6.5v4" stroke="#111" stroke-width="2"/><path d="M4 4.5h4.5L6 12.5h-2zM12.5 3l-3 6h3l-2 5.5 6-7h-3l2-4.5zM16 4.5h3.5v8H14z" fill="#111"/></svg>
<svg class="a" style="left:1306px;top:3px" width="20" height="17" viewBox="0 0 20 17"><rect x="1" y="1" width="18" height="15" fill="none" stroke="#333" stroke-width="1.3"/><path d="M1 4.5h18" stroke="#333" stroke-width="1.3"/><g fill="none" stroke="#333" stroke-width=".9"><path d="M8 8h4v4H8z"/><circle cx="7.2" cy="7.2" r="1"/><circle cx="12.8" cy="7.2" r="1"/><circle cx="7.2" cy="12.8" r="1"/><circle cx="12.8" cy="12.8" r="1"/></g></svg>
<div class="t" style="left:1340px;top:4px;font-size:15px;color:#111">Tue 12:19 PM</div>
<div class="t" style="left:1453px;top:4px;font-size:15px;color:#111;font-weight:bold;-webkit-text-stroke:0">bboyd</div>
<svg class="a" style="left:1519px;top:2px" width="19" height="19" viewBox="0 0 19 19"><circle cx="7.5" cy="7.5" r="5.5" fill="none" stroke="#111" stroke-width="1.6"/><path d="M11.5 11.5l6 6" stroke="#111" stroke-width="1.8"/></svg>
<svg class="a" style="left:1553px;top:4px" width="22" height="15" viewBox="0 0 22 15"><g fill="#111"><circle cx="2" cy="2" r="1.3"/><circle cx="2" cy="7.5" r="1.3"/><circle cx="2" cy="13" r="1.3"/><rect x="5" y="1" width="16" height="1.8"/><rect x="5" y="4.2" width="16" height="1.5"/><rect x="5" y="6.6" width="16" height="1.8"/><rect x="5" y="9.5" width="16" height="1.5"/><rect x="5" y="12.2" width="16" height="1.8"/></g></svg>

</body></html>
